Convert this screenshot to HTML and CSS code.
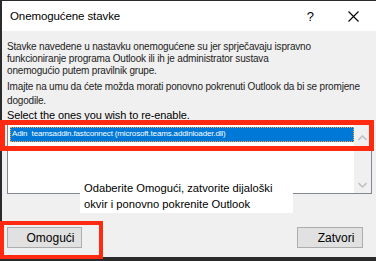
FILE: index.html
```html
<!DOCTYPE html>
<html lang="hr">
<head>
    <meta charset="UTF-8">
    <meta name="viewport" content="width=device-width, initial-scale=1.0">
    <title>Onemogućene stavke</title>
    <link rel="stylesheet" href="styles.css">
</head>
<body>
    <div class="stage">
        <div class="win">
            <div class="titlebar">
                <span class="title">Onemogućene stavke</span>
                <span class="help">?</span>
                <svg class="close" width="11" height="11" viewBox="0 0 11 11">
                    <path d="M0.5 0.5 L10.5 10.5 M10.5 0.5 L0.5 10.5" stroke="#000" stroke-width="1.1" fill="none"/>
                </svg>
            </div>

            <div class="content">
                <p class="info">Stavke navedene u nastavku onemogućene su jer sprječavaju ispravno<br>
                funkcioniranje programa Outlook ili ih je administrator sustava<br>
                onemogućio putem pravilnik grupe.</p>
                <p class="info info2">Imajte na umu da ćete možda morati ponovno pokrenuti Outlook da bi se promjene<br>
                dogodile.</p>
                <div class="prompt">Select the ones you wish to re-enable.</div>

                <div class="listbox">
                    <div class="items">
                        <div class="item selected">Adin&nbsp; teamsaddin.fastconnect (microsoft.teams.addinloader.dll)</div>
                    </div>
                    <div class="scroll">
                        <svg width="9" height="6" viewBox="0 0 9 6"><path d="M0.5 5 L4.5 1 L8.5 5" stroke="#c2c2c2" stroke-width="1.6" fill="none"/></svg>
                        <svg width="9" height="6" viewBox="0 0 9 6"><path d="M0.5 1 L4.5 5 L8.5 1" stroke="#c2c2c2" stroke-width="1.6" fill="none"/></svg>
                    </div>
                </div>

                <div class="buttons">
                    <button class="btn btn-on">Omogući</button>
                    <button class="btn btn-off">Zatvori</button>
                </div>
            </div>
        </div>

        <!-- oblacic s uputom i crveni okviri preko dijaloga -->
        <div class="callout">Odaberite Omogući, zatvorite dijaloški<br>okvir i ponovno pokrenite Outlook</div>
        <div class="mark mark-list"></div>
        <div class="mark mark-btn"></div>
    </div>
</body>
</html>
```

FILE: styles.css
```css
body {
    margin: 0;
    background-color: #2b2b2b;
    font-family: "Liberation Sans", Arial, sans-serif;
}

.stage {
    position: relative;
    width: 376px;
    height: 261px;
    padding: 1px 0 4px 2px;
    box-sizing: border-box;
    overflow: hidden;
}

.win {
    height: 100%;
    background-color: #f0f0f0;
    display: flex;
    flex-direction: column;
}

.titlebar {
    flex-shrink: 0;
    height: 30px;
    background-color: #fff;
    display: flex;
    align-items: center;
    padding-left: 8px;
    padding-right: 17px;
}

.title {
    flex: 1;
    font-size: 11.5px;
    letter-spacing: -0.1px;
    color: #000;
}

.help {
    font-size: 13px;
    color: #000;
    margin-right: 34px;
}

.close {
    display: block;
}

.content {
    flex: 1;
    min-height: 0;
    padding: 10px 4px 0 5px;
    display: flex;
    flex-direction: column;
}

.info {
    margin: 0;
    font-size: 10px;
    line-height: 12px;
    letter-spacing: -0.18px;
    white-space: nowrap;
    color: #1c1c1c;
}

.info2 {
    margin-top: 3px;
    line-height: 14px;
}

.prompt {
    font-size: 11px;
    letter-spacing: -0.1px;
    line-height: 15px;
    white-space: nowrap;
    color: #000;
}

.listbox {
    flex-shrink: 0;
    height: 71px;
    border: 1px solid #828790;
    background-color: #fff;
    display: flex;
    box-sizing: border-box;
}

.items {
    flex: 1;
    padding: 3px 0 0 2px;
}

.item {
    height: 15px;
    font-size: 8px;
    letter-spacing: -0.15px;
    line-height: 14px;
    padding-left: 2px;
    white-space: nowrap;
    box-sizing: border-box;
}

.selected {
    background-color: #0078d7;
    color: #fff;
    outline: 1px dotted #f3a64a;
    outline-offset: -1px;
}

.scroll {
    width: 17px;
    background-color: #f0f0f0;
    display: flex;
    flex-direction: column;
    justify-content: space-between;
    align-items: center;
    padding: 11px 0 5px;
}

.scroll svg {
    display: block;
}

.buttons {
    margin-top: 33px;
    display: flex;
    justify-content: space-between;
    padding-right: 9px;
}

.btn {
    height: 21px;
    background-color: #e1e1e1;
    border: 1px solid #adadad;
    font-family: "Liberation Sans", Arial, sans-serif;
    font-size: 12px;
    color: #000;
    padding: 0 0 0 12px;
}

.btn-on {
    width: 75px;
}

.btn-off {
    width: 66px;
}

.callout {
    position: absolute;
    left: 80px;
    top: 178px;
    width: 213px;
    height: 35px;
    background-color: #fff;
    box-sizing: border-box;
    padding: 2px 0 0 4px;
    font-size: 11.2px;
    line-height: 16px;
    color: #000;
}

.mark {
    position: absolute;
    left: 0;
    border: 5px solid #ff2a10;
    box-sizing: border-box;
}

.mark-list {
    top: 120px;
    width: 374px;
    height: 31px;
}

.mark-btn {
    top: 221px;
    width: 103px;
    height: 38px;
    border-width: 4px;
}
```
